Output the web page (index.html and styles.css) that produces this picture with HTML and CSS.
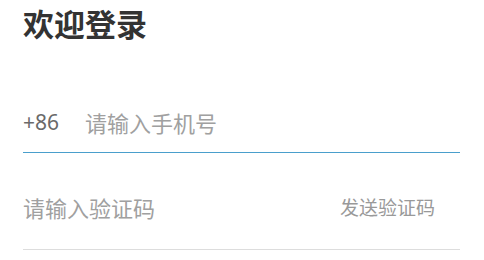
FILE: index.html
```html
<!DOCTYPE html>
<html lang="zh-CN">
<head>
<meta charset="utf-8">
<title>欢迎登录</title>
<link rel="stylesheet" href="styles.css">
</head>
<body>
<main class="login">
  <h1 class="login-title">欢迎登录</h1>
  <div class="field field-phone">
    <span class="prefix">+86</span>
    <span class="placeholder">请输入手机号</span>
  </div>
  <div class="field field-code">
    <span class="placeholder">请输入验证码</span>
    <span class="send-code">发送验证码</span>
  </div>
</main>
</body>
</html>
```

FILE: styles.css
```css
html, body {
  margin: 0;
  padding: 0;
  background: #ffffff;
}

body {
  font-family: "Noto Sans", "Noto Sans CJK SC", sans-serif;
  width: 484px;
  height: 260px;
  overflow: hidden;
}

.login {
  padding: 3px 24px 0 23px;
}

.login-title {
  margin: 0;
  font-size: 31px;
  line-height: 40px;
  font-weight: 700;
  color: #333333;
  font-family: "Noto Sans CJK SC", sans-serif;
}

.field {
  display: flex;
  align-items: center;
  line-height: 30px;
}

.field-phone {
  padding: 64px 0 15px;
  border-bottom: 1px solid #4a9fcc;
}

.field-code {
  padding: 39px 0 27px;
  border-bottom: 1px solid #dddddd;
  justify-content: space-between;
}

.prefix {
  font-size: 21px;
  color: #6a6a6a;
  width: 62px;
}

.placeholder {
  font-size: 22px;
  color: #a0a0a0;
  font-family: "Noto Sans CJK SC", sans-serif;
}

.send-code {
  font-size: 19px;
  color: #999999;
  margin-right: 25px;
  font-family: "Noto Sans CJK SC", sans-serif;
}
```
